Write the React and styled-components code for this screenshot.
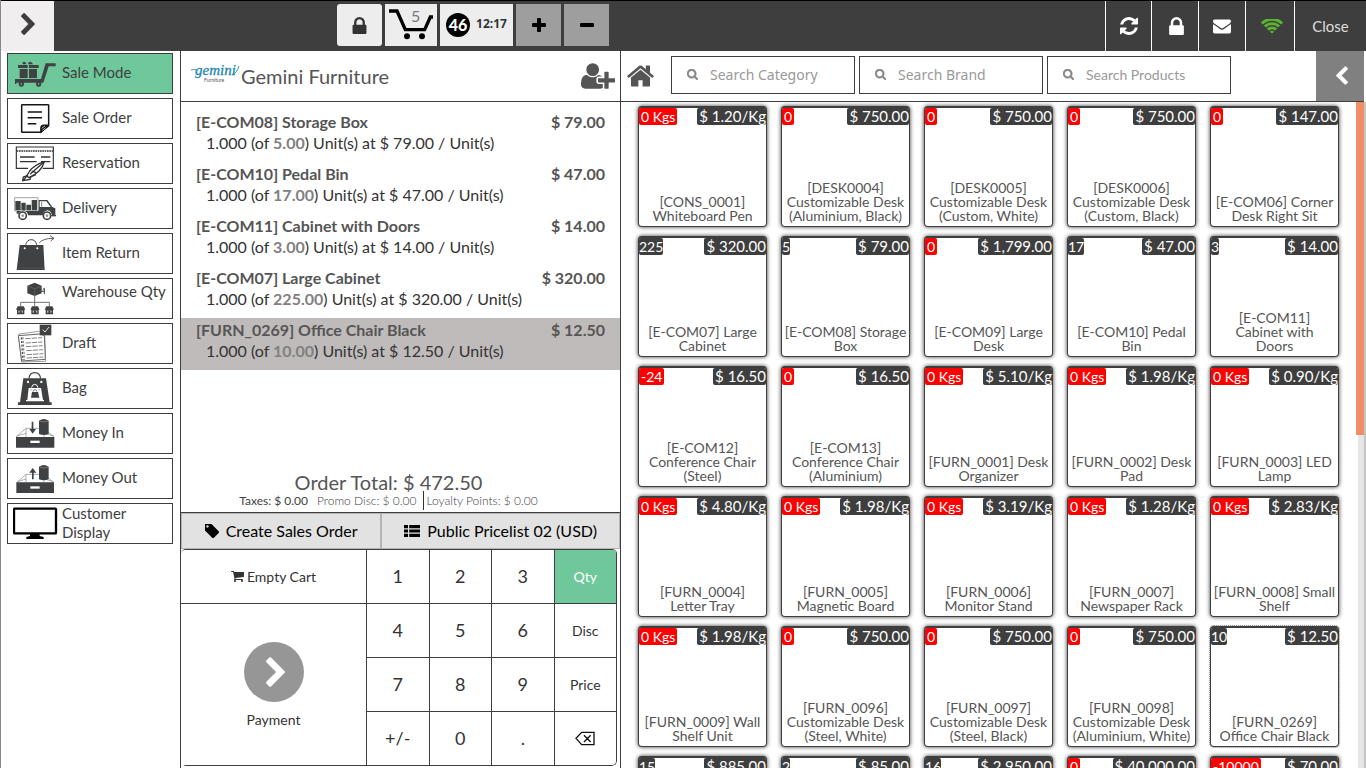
import React from "react";
import styled, { createGlobalStyle, css } from "styled-components";

const dark = "#3e3e3e";
const green = "#6ec89b";

const Global = createGlobalStyle`
  *, *::before, *::after { box-sizing: border-box; }
  html, body { margin: 0; background: #fff; }
  body { font-family: Lato, "Liberation Sans", sans-serif; font-size: 16px; color: #333; overflow: hidden; }
  button, input { font: inherit; color: inherit; margin: 0; }
  button { cursor: pointer; padding: 0; border: 0; background: none; }
  ul { list-style: none; margin: 0; padding: 0; }
  svg { display: block; flex: none; }
`;

/* ---------- icons ---------- */

const glyphs = {
  refresh: ["0 0 1536 1536", "M1511 928q0 5-1 7-64 268-268 434.5t-478 166.5q-146 0-282.5-55t-243.5-157l-129 129q-19 19-45 19t-45-19-19-45v-448q0-26 19-45t45-19h448q26 0 45 19t19 45-19 45l-137 137q71 66 161 102t187 36q134 0 250-65t186-179q11-17 53-117 8-23 30-23h192q13 0 22.5 9.5t9.5 22.5zm25-800v448q0 26-19 45t-45 19h-448q-26 0-45-19t-19-45 19-45l138-138q-148-137-349-137-134 0-250 65t-186 179q-11 17-53 117-8 23-30 23h-199q-13 0-22.5-9.5t-9.5-22.5v-7q65-268 270-434.5t480-166.5q146 0 284 55.5t245 156.5l130-129q19-19 45-19t45 19 19 45z"],
  lock: ["320 128 1152 1408", "M640 768h512v-192q0-106-75-181t-181-75-181 75-75 181v192zm832 96v576q0 40-28 68t-68 28h-960q-40 0-68-28t-28-68v-576q0-40 28-68t68-28h32v-192q0-184 132-316t316-132 316 132 132 316v192h32q40 0 68 28t28 68z"],
  home: ["80 250 1632 1290", "M1472 992v480q0 26-19 45t-45 19h-384v-384h-256v384h-384q-26 0-45-19t-19-45v-480q0-1 .5-3t.5-3l575-474 575 474q1 2 1 6zm223-69l-62 74q-8 9-21 11h-3q-13 0-21-7l-692-577-692 577q-12 8-24 7-13-2-21-11l-62-74q-8-10-7-23.5t11-21.5l719-599q32-26 76-26t76 26l244 204v-195q0-14 9-23t23-9h192q14 0 23 9t9 23v408l219 182q10 8 11 21.5t-7 23.5z"],
  search: ["64 128 1664 1664", "M1216 832q0-185-131.5-316.5t-316.5-131.5-316.5 131.5-131.5 316.5 131.5 316.5 316.5 131.5 316.5-131.5 131.5-316.5zm512 832q0 52-38 90t-90 38q-54 0-90-38l-343-342q-179 124-399 124-143 0-273.5-55.5t-225-150-150-225-55.5-273.5 55.5-273.5 150-225 225-150 273.5-55.5 273.5 55.5 225 150 150 225 55.5 273.5q0 220-124 399l343 343q37 37 37 90z"],
  wifi: ["40 256 1968 1280", "M1024 1523q-20 0-93-73.5t-73-93.5q0-32 62.5-54t103.5-22 103.5 22 62.5 54q0 20-73 93.5t-93 73.5zm270-271q-2 0-40-25t-101.5-50-128.5-25-128.5 25-101 50-40.5 25q-18 0-93.5-75t-75.5-93q0-13 10-23 78-77 196-121t233-44 233 44 196 121q10 10 10 23 0 18-75.5 93t-93.5 75zm273-272q-11 0-23-8-136-105-252-154.5t-268-49.5q-85 0-170.5 22t-149 53-113.5 62-79 53-31 22q-17 0-92-75t-75-93q0-12 10-22 132-132 320-205t380-73 380 73 320 205q10 10 10 22 0 18-75 93t-92 75zm271-271q-11 0-22-9-179-157-371.5-236.5t-420.5-79.5-420.5 79.5-371.5 236.5q-11 9-22 9-17 0-92.5-75t-75.5-93q0-13 10-23 187-186 445-288t527-102 527 102 445 288q10 10 10 23 0 18-75.5 93t-92.5 75z"],
  userPlus: ["0 128 2048 1536", "M704 896q-159 0-271.5-112.5t-112.5-271.5 112.5-271.5 271.5-112.5 271.5 112.5 112.5 271.5-112.5 271.5-271.5 112.5zm960 128h352q13 0 22.5 9.5t9.5 22.5v192q0 13-9.5 22.5t-22.5 9.5h-352v352q0 13-9.5 22.5t-22.5 9.5h-192q-13 0-22.5-9.5t-9.5-22.5v-352h-352q-13 0-22.5-9.5t-9.5-22.5v-192q0-13 9.5-22.5t22.5-9.5h352v-352q0-13 9.5-22.5t22.5-9.5h192q13 0 22.5 9.5t9.5 22.5v352zm-736 224q0 52 38 90t90 38h256v238q-68 50-171 50h-874q-121 0-194-69t-73-190q0-53 3.5-103.5t14-109 26.5-108.5 43-97.5 62-81 85.5-53.5 111.5-20q19 0 39 17 79 61 154.5 91.5t164.5 30.5 164.5-30.5 154.5-91.5q20-17 39-17 132 0 217 96h-223q-52 0-90 38t-38 90v192z"],
  right: ["346 26 1036 1612", "M1363 877l-742 742q-19 19-45 19t-45-19l-166-166q-19-19-19-45t19-45l531-531-531-531q-19-19-19-45t19-45l166-166q19-19 45-19t45 19l742 742q19 19 19 45t-19 45z"],
  left: ["410 26 1036 1612", "M1427 301l-531 531 531 531q19 19 19 45t-19 45l-166 166q-19 19-45 19t-45-19l-742-742q-19-19-19-45t19-45l742-742q19-19 45-19t45 19l166 166q19 19 19 45t-19 45z"],
  cart: ["64 256 1664 1408", "M704 1536q0 52-38 90t-90 38-90-38-38-90 38-90 90-38 90 38 38 90zm896 0q0 52-38 90t-90 38-90-38-38-90 38-90 90-38 90 38 38 90zm128-1088v512q0 24-16.5 42.5t-40.5 21.5l-1044 122q13 60 13 70 0 16-24 64h920q26 0 45 19t19 45-19 45-45 19h-1024q-26 0-45-19t-19-45q0-11 8-31.5t16-36 21.5-40 15.5-29.5l-177-823h-204q-26 0-45-19t-19-45 19-45 45-19h256q16 0 28.5 6.5t19.5 15.5 13 24.5 8 26 5.5 29.5 4.5 26h1201q26 0 45 19t19 45z"],
  tag: ["192 192 1451 1451", "M576 448q0-53-37.5-90.5t-90.5-37.5-90.5 37.5-37.5 90.5 37.5 90.5 90.5 37.5 90.5-37.5 37.5-90.5zm1067 576q0 53-37 90l-491 492q-39 37-91 37-53 0-90-37l-715-716q-38-37-64.5-101t-26.5-117v-416q0-52 38-90t90-38h416q53 0 117 26.5t102 64.5l715 714q37 39 37 91z"],
  mail: ["0 256 1792 1408", "M1792 710v794q0 66-47 113t-113 47h-1472q-66 0-113-47t-47-113v-794q44 49 101 87 362 246 497 345 57 42 92.5 65.5t94.5 48 110 24.5h2q51 0 110-24.5t94.5-48 92.5-65.5q170-123 498-345 57-39 100-87zm0-294q0 79-49 151t-122 123q-376 261-468 325-10 7-42.5 31t-54 38.5-52 32.5-57.5 27-50 9h-2q-23 0-50-9t-57.5-27-52-32.5-54-38.5-42.5-31q-91-64-262-182.5t-205-142.5q-62-42-117-115.5t-55-136.5q0-78 41.5-130t118.5-52h1472q65 0 112.5 47t47.5 113z"],
  plus: ["0 0 14 14", "M5 1q0-1 1-1h2q1 0 1 1v4h4q1 0 1 1v2q0 1-1 1h-4v4q0 1-1 1h-2q-1 0-1-1v-4h-4q-1 0-1-1v-2q0-1 1-1h4z"],
  minus: ["0 0 14 14", "M1 5h12q1 0 1 1v2q0 1-1 1h-12q-1 0-1-1v-2q0-1 1-1z"],
  list: ["0 0 16 12", "M0 0h4v3.2h-4zM5.2 0h10.8v3.2h-10.8zM0 4.4h4v3.2h-4zM5.2 4.4h10.8v3.2h-10.8zM0 8.8h4v3.2h-4zM5.2 8.8h10.8v3.2h-10.8z"],
};

const Glyph = ({ name, w, h }) => (
  <svg width={w} height={h} viewBox={glyphs[name][0]} fill="currentColor" aria-hidden="true">
    <path d={glyphs[name][1]} />
  </svg>
);

const ModeArt = ({ top, children }) => (
  <svg width="45" height="39" viewBox={`39 ${top} 135 117`} fill="#3f4142" stroke="none" aria-hidden="true">
    {children}
  </svg>
);

const art = {
  sale: (
    <ModeArt top={162}>
      <path d="M137 190h30v9h-21l-16 49H49v4h-4v-15h78z" />
      <path d="M54 195h29v9h-29zM87 195h29v9h-29zM59 207h24v27h-24zM87 207h24v27h-24z" />
      <circle cx="64" cy="252" r="8" /><circle cx="116" cy="252" r="8" />
      <path d="M68 193q-2-8 5-8 5 0 6 8zM84 193q0-8 6-8 6 0 9 8z" />
      <circle cx="64" cy="252" r="2.5" fill={green} /><circle cx="116" cy="252" r="2.5" fill={green} />
    </ModeArt>
  ),
  order: (
    <ModeArt top={297}>
      <path d="M65 316q0-2 2-2h76q3 0 3 2v60l-24 21H67q-2 0-2-2z" fill="none" stroke="#151515" strokeWidth="4.5" />
      <path d="M145 375v4l-23 19v-15q0-8 8-8z" fill="#151515" stroke="#151515" strokeWidth="3" />
      <path d="M83 336h43M83 353h43M83 371h26" stroke="#151515" strokeWidth="4.5" />
      <path d="M125 385l10-7M127 391l10-8" stroke="#fff" strokeWidth="2" />
    </ModeArt>
  ),
  reserve: (
    <ModeArt top={432}>
      <path d="M84 505H49v-64h111v64h-32" fill="none" stroke="#333" strokeWidth="3.5" />
      <path d="M50 453h110" stroke="#333" strokeWidth="5" strokeDasharray="5 2" />
      <path d="M60 471h44M60 485h50M123 471h28M123 485h28" fill="none" stroke="#333" strokeWidth="4" />
      <path d="M133 485q-30 10-44 28-5 8-9 15l7 5q20-10 30-20 12-12 16-28z" fill="#fff" stroke="#333" strokeWidth="4" />
      <path d="M82 527l-12 4-2 11 22-4 3-8 15-6M132 486l-42 37M95 513l13 5M84 524l-14 17" fill="none" stroke="#333" strokeWidth="4" />
    </ModeArt>
  ),
  delivery: (
    <ModeArt top={27}>
      <path d="M44 53h70v40M44 53v40h74" fill="none" stroke="#777" strokeWidth="2" />
      <path d="M46 63h16v28h-16zM64 68h13v23h-13zM79 74h14v17h-14zM95 60h16v31h-16z" />
      <path d="M50 93h66V60h26l15 21 9 4v20h-10l-4-9q-8-10-20 0l-4 10H84q-1-14-15-14-10 0-13 9h-6z" />
      <path d="M119 64h20l13 17h-33z" fill="#fff" />
      <path d="M125 66v14" stroke="#3f4142" strokeWidth="2" />
      <circle cx="68" cy="107" r="11" fill="#fff" stroke="#3f4142" strokeWidth="5" />
      <circle cx="141" cy="107" r="11" fill="#fff" stroke="#3f4142" strokeWidth="5" />
      <circle cx="68" cy="107" r="4" fill="#999" /><circle cx="141" cy="107" r="4" fill="#999" />
      <path d="M154 107h14" stroke="#3f4142" strokeWidth="4" />
    </ModeArt>
  ),
  ret: (
    <ModeArt top={162}>
      <path d="M59 195h71l4 75H50z" />
      <path d="M50 264h84" stroke="#777" strokeWidth="1" />
      <path d="M77 194q4-15 17-15 12 0 16 15" fill="none" stroke="#3f4142" strokeWidth="3" />
      <circle cx="74" cy="205" r="3" fill="#fff" /><circle cx="112" cy="205" r="3" fill="#fff" />
      <path d="M118 188q12-13 42-13M150 167l12 8-10 8" fill="none" stroke="#3f4142" strokeWidth="2.5" />
    </ModeArt>
  ),
  warehouse: (
    <ModeArt top={297}>
      <path d="M82 317l22-9 21 9v23l-21 8-22-8z" />
      <path d="M84 319l20 7 20-7M104 326v21" fill="none" stroke="#777" strokeWidth="1.5" />
      <path d="M128 329l5-4v17M124 334h10" fill="none" stroke="#3f4142" strokeWidth="3" />
      <path d="M104 348v30M62 378v-11h86v11" fill="none" stroke="#555" strokeWidth="2.5" />
      {[62, 105, 148].map((x) => (
        <g key={x} transform={`translate(${x} 0)`}>
          <path d="M-9 379h18l5 10h-28zM-11 389h22v14h-22z" />
          <path d="M-7 392h14v6h-14z" fill="#bbb" />
          <path d="M-3 392h6v7h-6z" />
        </g>
      ))}
    </ModeArt>
  ),
  draft: (
    <ModeArt top={432}>
      <path d="M59 468l-3-6 62-8M134 466l3 78-72 2-9-76" fill="none" stroke="#888" strokeWidth="2.5" />
      <path d="M55 467l64-5 14 4 3 72-71 5z" fill="#fff" stroke="#666" strokeWidth="3" />
      <path d="M76 476l50-3M77 489l50-3M78 500l50-3M79 512l50-3M80 524l50-3M80 534l50-3" stroke="#666" strokeWidth="2.5" strokeDasharray="16 3" />
      <path d="M66 472l5 68" stroke="#444" strokeWidth="8" strokeDasharray="6 5" />
      <path d="M67 472l5 68" stroke="#fff" strokeWidth="2" strokeDasharray="6 5" />
      <path d="M119 434h35v32h-35z" />
      <path d="M128 449l7 7 12-15" fill="none" stroke="#fff" strokeWidth="2.5" />
    </ModeArt>
  ),
  bag: (
    <ModeArt top={27}>
      <path d="M70 55h68l11 72h6v8H54v-8h6z" />
      <path d="M87 55q2-17 17-17t18 17" fill="none" stroke="#3f4142" strokeWidth="3.5" />
      <circle cx="84" cy="66" r="3.5" fill="#fff" /><circle cx="124" cy="66" r="3.5" fill="#fff" />
      <path d="M86 84h37l6 36h3v4H78v-4h4z" fill="#fff" />
      <path d="M95 83q1-10 9-10t10 10" fill="none" stroke="#fff" strokeWidth="3" />
      <path d="M96 96h18l4 17H93z" /><path d="M99 95q1-6 6-6t6 6" fill="none" stroke="#3f4142" strokeWidth="2" />
      <circle cx="93" cy="89" r="1.5" /><circle cx="117" cy="89" r="1.5" />
    </ModeArt>
  ),
  moneyIn: (
    <ModeArt top={162}>
      <path d="M48 231l30-26h54l30 26M78 205v26M132 205v26M50 228l28-8M134 220l27 8" fill="none" stroke="#888" strokeWidth="2" />
      <path d="M48 231h115v32H48z" /><path d="M91 242h28v7H91z" fill="#fff" />
      <path d="M95 185h5v22h8l-10 14-10-14h7z" />
      <path d="M117 182q14-10 29 0v40q-14 6-29 0z" />
      <path d="M119 183q13 6 25 0" fill="none" stroke="#aaa" strokeWidth="1.5" />
    </ModeArt>
  ),
  moneyOut: (
    <ModeArt top={297}>
      <path d="M50 368l28-25h54l29 25M78 343v25M132 343v25M52 365l26-8M134 357l26 8" fill="none" stroke="#888" strokeWidth="2" />
      <path d="M49 367h113v32H49z" /><path d="M91 379h28v7H91z" fill="#fff" />
      <path d="M96 358h5v-20h8l-11-14-10 14h8z" />
      <path d="M117 320q14-10 29 0v38q-14 6-29 0z" />
      <path d="M119 321q13 6 25 0" fill="none" stroke="#aaa" strokeWidth="1.5" />
    </ModeArt>
  ),
  display: (
    <ModeArt top={432}>
      <rect x="42" y="446" width="126" height="74" rx="2" fill="#fff" stroke="#000" strokeWidth="7" />
      <path d="M90 521h29v7l12 3v6H79v-6l11-3z" fill="#000" />
    </ModeArt>
  ),
};

/* ---------- page frame ---------- */

const Page = styled.div`
  height: 100vh;
  display: flex;
  flex-direction: column;
  border-left: 1px solid #888;
`;

const TopBar = styled.header`
  flex: none;
  height: 51px;
  border-top: 1px solid #000;
  background: ${dark};
  display: flex;
  justify-content: space-between;
`;

const BarGroup = styled.div`
  display: flex;
  gap: ${(p) => p.$gap || 0}px;
`;

const MenuToggle = styled.button`
  width: 53px;
  margin-right: 280px;
  padding-bottom: 5px;
  background: #f0eeee;
  color: ${dark};
  display: grid;
  place-items: center;
`;

const BarButton = styled.button`
  width: ${(p) => p.$w || 45}px;
  height: 42px;
  margin-top: 3px;
  border-radius: ${(p) => (p.$round ? 3 : 0)}px;
  background: ${(p) => (p.$grey ? "#9e9e9e" : "#ededed")};
  color: ${(p) => (p.$grey ? "#000" : "#333")};
  display: flex;
  align-items: center;
  justify-content: center;
  gap: 6px;
  font-size: 12px;
  font-weight: 900;
  position: relative;
`;

const CartCount = styled.span`
  position: absolute;
  left: 26px;
  top: 2px;
  font-size: 16px;
  line-height: 19px;
  font-weight: 400;
  color: #777;
`;

const OrderTime = styled.time`
  font-family: "Noto Sans", sans-serif;
  font-size: 12px;
  line-height: 16px;
  font-weight: 700;
  padding-bottom: 2px;
`;

const OrderNumber = styled.span`
  width: 24px;
  height: 24px;
  border-radius: 50%;
  background: #000;
  color: #fff;
  font-size: 16px;
  line-height: 24px;
  text-align: center;
`;

const StatusButton = styled.button`
  width: ${(p) => p.$w}px;
  padding-left: ${(p) => p.$shift || 0}px;
  border-left: 1px solid #fff;
  color: ${(p) => p.$color || "#fff"};
  display: grid;
  place-items: center;
  font-size: 15px;
`;

const Body = styled.div`
  flex: 1;
  min-height: 0;
  display: flex;
`;

/* ---------- mode list ---------- */

const Sidebar = styled.nav`
  width: 180px;
  flex: none;
  padding: 2px 7px 0 6px;
  border-right: 1px solid ${dark};
  display: flex;
  flex-direction: column;
  gap: 4px;
`;

const ModeButton = styled.button`
  height: 41px;
  padding-left: 5px;
  border: 1px solid ${dark};
  background: ${(p) => (p.$active ? green : "#fff")};
  color: ${dark};
  display: flex;
  align-items: center;
  gap: 4px;
  text-align: left;
  font-size: 15px;
  line-height: 19px;
`;

const ModeLabel = styled.span`
  flex: 1;
  padding-bottom: 2px;
  ${(p) => p.$top && css`align-self: flex-start; padding-top: 3px; white-space: nowrap;`}
`;

/* ---------- order ---------- */

const Order = styled.section`
  width: 440px;
  flex: none;
  border-right: 1px solid ${dark};
  display: flex;
  flex-direction: column;
`;

const OrderHead = styled.div`
  height: 51px;
  flex: none;
  padding: 0 5px 0 9px;
  border-bottom: 1px solid ${dark};
  display: flex;
  align-items: center;
  gap: 1px;
  color: #555;
`;

const Company = styled.h1`
  margin: 0;
  flex: 1;
  font-size: 20px;
  line-height: 24px;
  font-weight: 400;
`;

const Lines = styled.ul`
  flex: 1;
  min-height: 0;
  padding-top: 8px;
`;

const Line = styled.li`
  height: 52px;
  padding: 1px 15px 9px;
  background: ${(p) => (p.$selected ? "#bfbbba" : "transparent")};
  font-size: 16px;
  line-height: 21px;
`;

const LineName = styled.div`
  display: flex;
  justify-content: space-between;
  font-weight: 700;
  color: #555;
`;

const LineInfo = styled.div`
  padding-left: 10px;
  color: #333;
  b { color: #808080; }
`;

const Totals = styled.div`
  height: 41px;
  padding-right: 24px;
  border-bottom: 1px solid ${dark};
  text-align: center;
  color: #555;
`;

const Total = styled.div`
  height: 19px;
  font-size: 20px;
  line-height: 20px;
`;

const TotalDetails = styled.div`
  display: flex;
  justify-content: center;
  font-size: 12px;
  line-height: 19px;
  color: ${dark};
`;

const Detail = styled.span`
  font-weight: ${(p) => (p.$light ? 300 : 400)};
  padding: 0 ${(p) => (p.$bar ? 6 : 3)}px;
  border-right: ${(p) => (p.$bar ? 1 : 0)}px solid #333;
`;

const Actions = styled.div`
  height: 36px;
  display: flex;
`;

const Action = styled.button`
  flex: ${(p) => p.$grow};
  border: 1px solid #b4b4b4;
  background: #e2e2e2;
  color: #000;
  display: flex;
  align-items: center;
  justify-content: center;
  gap: 7px;
  padding-bottom: 1px;
  font-size: 16px;
`;

const Keypad = styled.div`
  margin: 0 3px 2px 0;
  display: grid;
  grid-template-columns: 186px repeat(4, 1fr);
  grid-template-rows: repeat(4, 54px);
  border-top: 1px solid ${dark};
  border-radius: 5px;
  overflow: hidden;
`;

const Key = styled.button`
  border: 0 solid ${dark};
  border-width: 0 1px 1px 0;
  background: ${(p) => (p.$active ? green : "#fff")};
  color: ${(p) => (p.$active ? "#fff" : "#333")};
  font-size: ${(p) => (p.$text ? 14 : 18)}px;
  padding-bottom: ${(p) => (p.$text ? 0 : 1)}px;
  display: flex;
  align-items: center;
  justify-content: center;
  gap: 3px;
  ${(p) => p.$corner && css`border-bottom-right-radius: 5px;`}
`;

const PayKey = styled(Key)`
  grid-row: span 3;
  flex-direction: column;
  gap: 9px;
`;

const PayCircle = styled.span`
  width: 60px;
  height: 60px;
  padding-left: 3px;
  border-radius: 50%;
  background: #969696;
  color: #fff;
  display: grid;
  place-items: center;
`;

/* ---------- products ---------- */

const Products = styled.section`
  flex: 1;
  min-width: 0;
  display: flex;
  flex-direction: column;
`;

const SearchBar = styled.div`
  height: 51px;
  flex: none;
  border-bottom: 1px solid ${dark};
  margin-right: 2px;
  display: flex;
  align-items: center;
`;

const HomeButton = styled.button`
  width: 38px;
  margin-right: 12px;
  display: grid;
  place-items: center;
  color: #555;
`;

const SearchBox = styled.label`
  width: 184px;
  height: 38px;
  margin: 0 4px 3px 0;
  padding-left: 15px;
  border: 1px solid ${dark};
  display: flex;
  align-items: center;
  gap: 12px;
  color: #858585;
  input {
    width: 136px;
    border: 0;
    padding: 0;
    outline: 0;
    background: none;
    font-family: ${(p) => (p.$noto ? '"Noto Sans", sans-serif' : 'Lato, sans-serif')};
    font-size: 14px;
    line-height: 20px;
  }
  path { stroke: currentColor; stroke-width: 60; }
  input::placeholder { color: #999; opacity: 1; }
`;

const Collapse = styled.button`
  align-self: stretch;
  width: 48px;
  margin-left: auto;
  padding: 0 0 2px 4px;
  background: #808080;
  color: #fff;
  display: grid;
  place-items: center;
`;

const Shelf = styled.div`
  flex: 1;
  min-height: 0;
  display: flex;
  border-right: 2px solid #c4c4c4;
`;

const Grid = styled.div`
  flex: 1;
  overflow: hidden;
  padding: 4px 0 0 17px;
  display: grid;
  grid-template-columns: repeat(auto-fill, 129px);
  grid-auto-rows: 121px;
  gap: 9px 14px;
`;

const Card = styled.button`
  border: 1px solid ${dark};
  border-top-width: 2px;
  border-radius: 4px;
  background: #fff;
  box-shadow: 0 0 4px #333;
  display: flex;
  flex-direction: column;
  justify-content: space-between;
  color: #555;
  font-size: 14px;
  line-height: 14px;
  ${(p) => p.$focus && css`outline: 1px dotted #999; box-shadow: 0 0 2px #999;`}
`;

const Badges = styled.span`
  width: 100%;
  display: flex;
  justify-content: space-between;
`;

const Badge = styled.span`
  padding: ${(p) => (p.$stock && !p.$low ? "0" : p.$stock ? "0 2px" : "0 0 0 2px")};
  border-radius: 2px;
  background: ${(p) => (p.$low ? "#f00" : dark)};
  color: #fff;
  font-size: ${(p) => (p.$stock ? 14 : 15)}px;
  line-height: 17px;
`;

const ProductName = styled.span`
  width: 100%;
  padding: 0 2px 3px;
  white-space: pre-line;
`;

const ScrollTrack = styled.div`
  width: 8px;
  background: linear-gradient(90deg, #fff 2px, #e6e6e6 2px);
`;

const ScrollThumb = styled.div`
  width: 8px;
  height: 50%;
  background: #ef8e67;
`;

/* ---------- data ---------- */

const modes = [
  ["Sale Mode", "sale"], ["Sale Order", "order"], ["Reservation", "reserve"], ["Delivery", "delivery"],
  ["Item Return", "ret"], ["Warehouse Qty", "warehouse"], ["Draft", "draft"], ["Bag", "bag"],
  ["Money In", "moneyIn"], ["Money Out", "moneyOut"], ["Customer Display", "display"],
];

const lines = [
  ["[E-COM08] Storage Box", "5.00", "79.00"],
  ["[E-COM10] Pedal Bin", "17.00", "47.00"],
  ["[E-COM11] Cabinet with Doors", "3.00", "14.00"],
  ["[E-COM07] Large Cabinet", "225.00", "320.00"],
  ["[FURN_0269] Office Chair Black", "10.00", "12.50"],
];

const products = [
  ["0 Kgs", "1.20/Kg", "[CONS_0001] Whiteboard Pen"],
  ["0", "750.00", "[DESK0004] Customizable Desk (Aluminium, Black)"],
  ["0", "750.00", "[DESK0005] Customizable Desk (Custom, White)"],
  ["0", "750.00", "[DESK0006] Customizable Desk (Custom, Black)"],
  ["0", "147.00", "[E-COM06] Corner Desk Right Sit"],
  ["225", "320.00", "[E-COM07] Large Cabinet"],
  ["5", "79.00", "[E-COM08] Storage Box"],
  ["0", "1,799.00", "[E-COM09] Large Desk"],
  ["17", "47.00", "[E-COM10] Pedal Bin"],
  ["3", "14.00", "[E-COM11]\nCabinet with\nDoors"],
  ["-24", "16.50", "[E-COM12] Conference Chair (Steel)"],
  ["0", "16.50", "[E-COM13] Conference Chair (Aluminium)"],
  ["0 Kgs", "5.10/Kg", "[FURN_0001] Desk Organizer"],
  ["0 Kgs", "1.98/Kg", "[FURN_0002] Desk Pad"],
  ["0 Kgs", "0.90/Kg", "[FURN_0003] LED Lamp"],
  ["0 Kgs", "4.80/Kg", "[FURN_0004] Letter Tray"],
  ["0 Kgs", "1.98/Kg", "[FURN_0005] Magnetic Board"],
  ["0 Kgs", "3.19/Kg", "[FURN_0006] Monitor Stand"],
  ["0 Kgs", "1.28/Kg", "[FURN_0007] Newspaper Rack"],
  ["0 Kgs", "2.83/Kg", "[FURN_0008] Small Shelf"],
  ["0 Kgs", "1.98/Kg", "[FURN_0009] Wall Shelf Unit"],
  ["0", "750.00", "[FURN_0096] Customizable Desk (Steel, White)"],
  ["0", "750.00", "[FURN_0097] Customizable Desk (Steel, Black)"],
  ["0", "750.00", "[FURN_0098] Customizable Desk (Aluminium, White)"],
  ["10", "12.50", "[FURN_0269] Office Chair Black"],
  ["15", "885.00", ""],
  ["2", "85.00", ""],
  ["16", "2,950.00", ""],
  ["0", "40,000.00", ""],
  ["-10000", "70.00", ""],
];

const Logo = () => (
  <svg width="50" height="24" viewBox="0 0 50 24" overflow="visible" role="img" aria-label="gemini Furniture">
    <path d="M1 6q3-1 6 0M42 11q5-2 7-9" fill="none" stroke="#3a9ab5" strokeWidth="1" />
    <text x="5" y="11" fontFamily="Liberation Serif, serif" fontStyle="italic" fontSize="15" fill="#2387a8" stroke="#2387a8" strokeWidth="0.3">gemini</text>
    <text x="14" y="18" fontFamily="Lato, sans-serif" fontSize="5" fill="#555">Furniture</text>
  </svg>
);

const Backspace = () => (
  <svg width="20" height="15" viewBox="0 0 60 45" fill="none" stroke="#111" strokeWidth="4" aria-hidden="true">
    <path d="M20 4h37v37H20L3 22zM27 13l20 20M47 13l-20 20" />
  </svg>
);

export default function App() {
  return (
    <>
      <Global />
      <Page>
        <TopBar>
          <BarGroup $gap={3}>
            <MenuToggle aria-label="Open menu"><Glyph name="right" w={14} h={22} /></MenuToggle>
            <BarButton $round aria-label="Lock order"><Glyph name="lock" w={15} h={17} /></BarButton>
            <BarButton $w={52} aria-label="Cart items">
              <svg width="44" height="32" viewBox="0 0 132 96" aria-hidden="true">
                <path d="M0 6h24l25 56h58l17-38h8" fill="none" stroke="#000" strokeWidth="10" />
                <circle cx="54" cy="82" r="9" /><circle cx="99" cy="82" r="9" />
              </svg>
              <CartCount>5</CartCount>
            </BarButton>
            <BarButton $w={73}><OrderNumber>46</OrderNumber><OrderTime>12:17</OrderTime></BarButton>
            <BarButton $grey aria-label="New order"><Glyph name="plus" w={14} h={14} /></BarButton>
            <BarButton $grey aria-label="Remove order"><Glyph name="minus" w={14} h={14} /></BarButton>
          </BarGroup>
          <BarGroup>
            <StatusButton $w={46} aria-label="Refresh"><Glyph name="refresh" w={18} h={18} /></StatusButton>
            <StatusButton $w={47} $shift={3} aria-label="Lock screen"><Glyph name="lock" w={15} h={18} /></StatusButton>
            <StatusButton $w={47} aria-label="Messages"><Glyph name="mail" w={18} h={15} /></StatusButton>
            <StatusButton $w={49} $shift={4} $color="#5cb531" aria-label="Connection"><Glyph name="wifi" w={22} h={15} /></StatusButton>
            <StatusButton $w={72} $color="#ddd">Close</StatusButton>
          </BarGroup>
        </TopBar>
        <Body>
          <Sidebar>
            {modes.map(([label, icon]) => (
              <ModeButton key={icon} $active={icon === "sale"}>
                {art[icon]}
                <ModeLabel $top={icon === "warehouse"}>{label}</ModeLabel>
              </ModeButton>
            ))}
          </Sidebar>
          <Order>
            <OrderHead>
              <Logo />
              <Company>Gemini Furniture</Company>
              <button aria-label="Add customer"><Glyph name="userPlus" w={34} h={26} /></button>
            </OrderHead>
            <Lines>
              {lines.map(([name, stock, price], i) => (
                <Line key={name} $selected={i === 4}>
                  <LineName><span>{name}</span><span>$ {price}</span></LineName>
                  <LineInfo>1.000 (of <b>{stock}</b>) Unit(s) at $ {price} / Unit(s)</LineInfo>
                </Line>
              ))}
            </Lines>
            <Totals>
              <Total>Order Total: $ 472.50</Total>
              <TotalDetails>
                <Detail>Taxes: $ 0.00</Detail>
                <Detail $light $bar>Promo Disc: $ 0.00</Detail>
                <Detail $light>Loyalty Points: $ 0.00</Detail>
              </TotalDetails>
            </Totals>
            <Actions>
              <Action $grow={200}><Glyph name="tag" w={14} h={14} />Create Sales Order</Action>
              <Action $grow={239}><Glyph name="list" w={16} h={12} />Public Pricelist 02 (USD)</Action>
            </Actions>
            <Keypad>
              <Key $text><Glyph name="cart" w={13} h={11} />Empty Cart</Key>
              <Key>1</Key><Key>2</Key><Key>3</Key><Key $text $active>Qty</Key>
              <PayKey $text>
                <PayCircle><Glyph name="right" w={19} h={30} /></PayCircle>
                Payment
              </PayKey>
              <Key>4</Key><Key>5</Key><Key>6</Key><Key $text>Disc</Key>
              <Key>7</Key><Key>8</Key><Key>9</Key><Key $text>Price</Key>
              <Key>+/-</Key><Key>0</Key><Key>.</Key><Key $corner aria-label="Backspace"><Backspace /></Key>
            </Keypad>
          </Order>
          <Products>
            <SearchBar>
              <HomeButton aria-label="Home"><Glyph name="home" w={27} h={22} /></HomeButton>
              {["Category", "Brand", "Products"].map((what) => (
                <SearchBox key={what} $noto={what !== "Products"}>
                  <Glyph name="search" w={11} h={11} />
                  <input type="text" aria-label={`Search ${what}`} placeholder={`Search ${what}`} />
                </SearchBox>
              ))}
              <Collapse aria-label="Collapse panel"><Glyph name="left" w={12} h={19} /></Collapse>
            </SearchBar>
            <Shelf>
              <Grid>
                {products.map(([stock, price, name], i) => (
                  <Card key={i} $focus={i === 24}>
                    <Badges>
                      <Badge $stock $low={/^(0|-)/.test(stock)}>{stock}</Badge>
                      <Badge>$ {price}</Badge>
                    </Badges>
                    <ProductName>{name}</ProductName>
                  </Card>
                ))}
              </Grid>
              <ScrollTrack><ScrollThumb /></ScrollTrack>
            </Shelf>
          </Products>
        </Body>
      </Page>
    </>
  );
}
